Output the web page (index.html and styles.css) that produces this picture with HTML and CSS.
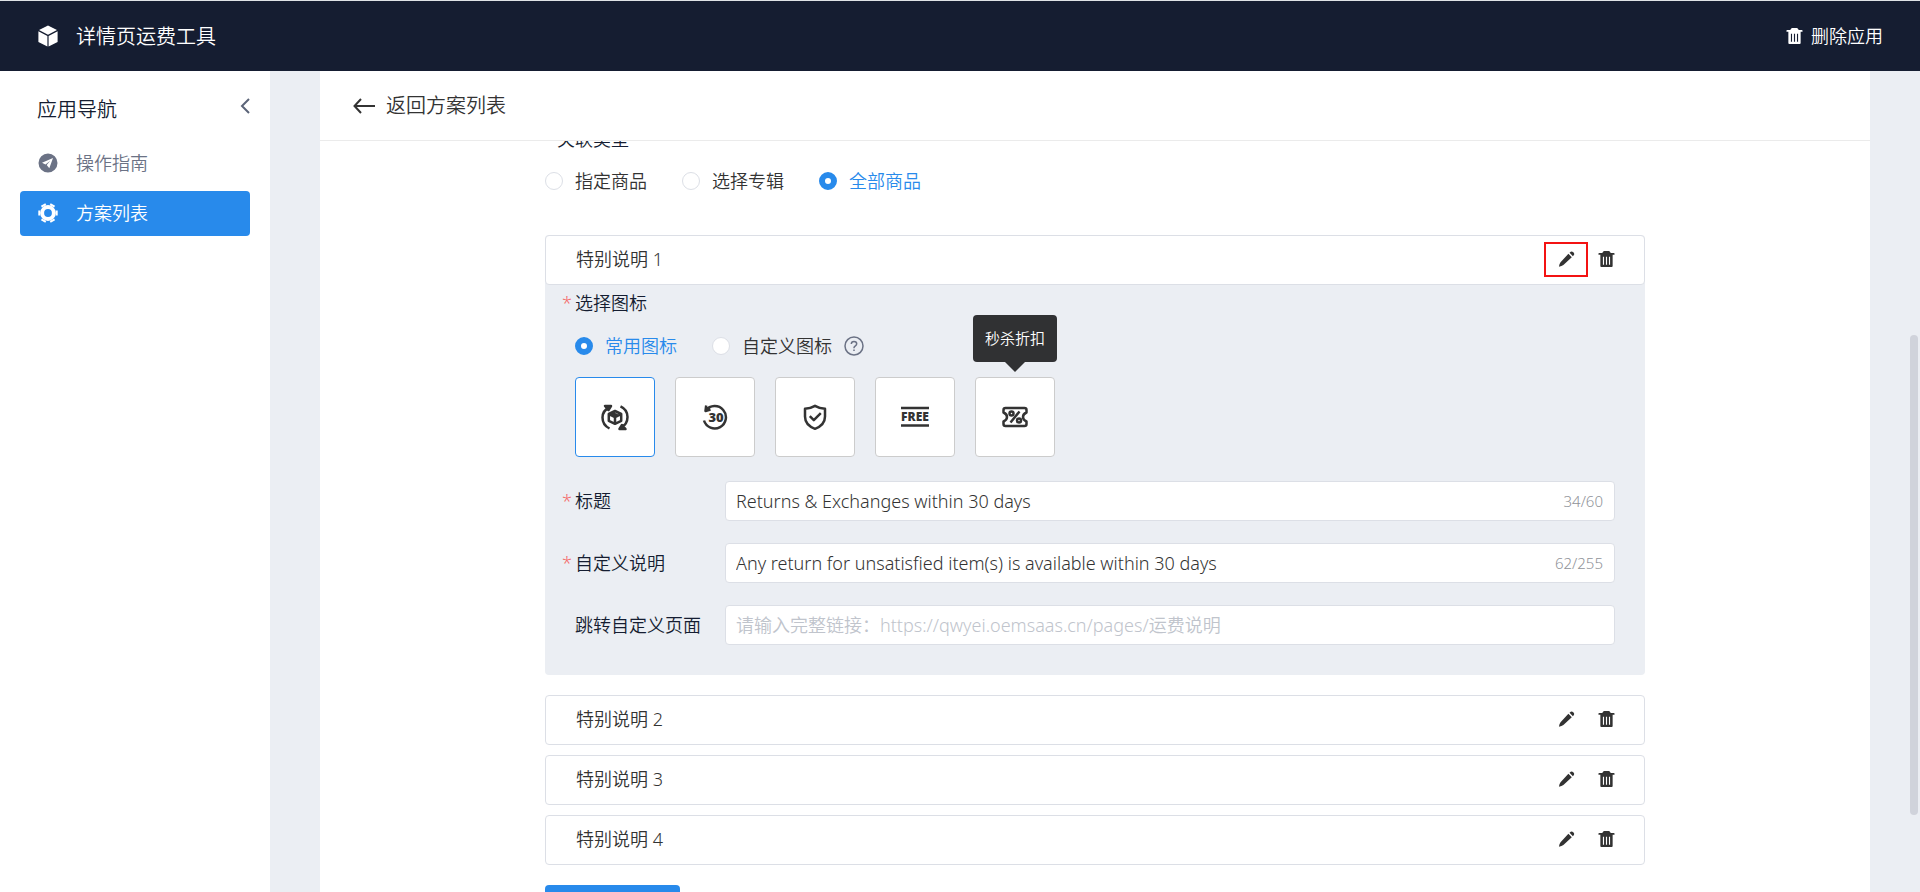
FILE: index.html
```html
<!DOCTYPE html>
<html lang="zh-CN">
<head>
<meta charset="utf-8">
<title>详情页运费工具</title>
<link rel="stylesheet" href="styles.css">
</head>
<body>
<svg class="sprite" aria-hidden="true">
  <symbol id="i-trash" viewBox="0 0 18 18"><path d="M5.400 1.200Q5.700.6 6.600.6h4.800q.9 0 1.200.6l.9 1.400h3.300q.7 0 .7.7v1.200H.5V3.300q0-.7.7-.7h3.300z"/><path fill-rule="evenodd" d="M2.500 3.500h13v13q0 1-1 1h-11q-1 0-1-1zM5.200 6.500v8.500h1.200V6.500zM8.400 6.500v8.500h1.200V6.500zM11.600 6.500v8.500h1.200V6.500z"/></symbol>
  <symbol id="i-pencil" viewBox="0 0 18 18"><path d="M11 3.500l3.600 3.600L5.700 15.400Q4 16.800 1 17.200q.3-3 1.700-4.800zM12.200 2.500l1.300-1.200q1.300-.7 2.700.6t.8 2.700l-1.200 1.400z"/></symbol>
</svg>
<div class="app">
  <header class="topbar">
    <div class="brand">
      <svg class="brand-icon" viewBox="0 0 20 22"><path d="M10 .5l9 4.500-9 4.700-9-4.700zM.4 6.300l9 4.700v10.500l-9-4.600zM19.600 6.300l-9 4.700v10.500l9-4.600z"/></svg>
      <span>详情页运费工具</span>
    </div>
    <button class="remove-app" type="button"><svg class="icon-md"><use href="#i-trash"/></svg>删除应用</button>
  </header>
  <div class="body">
    <aside class="sidebar">
      <div class="side-head">
        <span>应用导航</span>
        <button class="collapse" type="button" aria-label="收起"><svg viewBox="0 0 10 16"><path d="M9 1L2 8l7 7"/></svg></button>
      </div>
      <nav class="nav">
        <a class="nav-item" href="#"><svg class="nav-icon" viewBox="0 0 20 20"><path fill-rule="evenodd" d="M10 .5a9.500 9.500 0 1 0 0 19 9.500 9.500 0 0 0 0-19zM15 5l-3.700 10.300-2.600-3.200 3.500-4.300-4.700 3.600-3.500-1.700z"/></svg>操作指南</a>
        <a class="nav-item active" href="#"><svg class="nav-icon" viewBox="0 0 20 20"><circle class="gear-ring" cx="10" cy="10" r="5.900"/><path class="gear-teeth" d="M2.200 10H.3M17.800 10h1.900M6.100 3.300l-1-1.800M13.900 3.300l1-1.800M6.100 16.700l-1 1.800M13.900 16.700l1 1.800"/></svg>方案列表</a>
      </nav>
    </aside>
    <main class="main">
      <div class="page-head">
        <a class="back" href="#"><svg viewBox="0 0 22 16"><path d="M8 1L1.500 8 8 15M1.500 8H22"/></svg>返回方案列表</a>
      </div>
      <div class="scroller">
        <form class="content">
          <fieldset class="group">
            <legend class="group-title">关联类型</legend>
            <div class="radios">
              <label class="radio"><input type="radio" name="scope">指定商品</label>
              <label class="radio"><input type="radio" name="scope">选择专辑</label>
              <label class="radio"><input type="radio" name="scope" checked><span>全部商品</span></label>
            </div>
          </fieldset>

          <section class="note open">
            <div class="note-bar">
              <span>特别说明 1</span>
              <div class="actions">
                <button class="act marked" type="button" aria-label="编辑"><svg class="icon-md"><use href="#i-pencil"/></svg></button>
                <button class="act" type="button" aria-label="删除"><svg class="icon-md"><use href="#i-trash"/></svg></button>
              </div>
            </div>
            <div class="panel">
              <div class="label required">选择图标</div>
              <div class="radios">
                <label class="radio"><input type="radio" name="icon" checked><span>常用图标</span></label>
                <label class="radio"><input type="radio" name="icon">自定义图标</label>
                <svg class="help" viewBox="0 0 20 20"><circle cx="10" cy="10" r="9"/><path d="M7.300 8q0-2.600 2.700-2.600T12.700 7.800q0 1.200-1.300 2T10 11.700v.6M10 13.500v1.500"/></svg>
              </div>
              <div class="tiles">
                <button class="tile selected" type="button" aria-label="退换货"><svg viewBox="0 0 28 28"><path d="M14 8l6.200 3v6.800l-6.200 3-6.200-3v-6.800zM8 11.200l6 2.800 6-2.800M14 14v6.500M11 9.800l6 2.800"/><path d="M9 4Q1.500 7.500 1.500 14.500 1.500 22 8.500 25.500M4 3h6l-2.500 4zM19.500 3.300Q26.500 6.500 26.500 14q0 7-6.500 11M24.500 26h-6l2.500-4z"/></svg></button>
                <button class="tile" type="button" aria-label="30天"><svg viewBox="0 0 28 28"><path d="M4.800 7.500A11.200 11.200 0 1 1 3 17.500M5.200 2.500L4.500 8l5-1.500"/><text class="t30" x="15" y="19">30</text></svg></button>
                <button class="tile" type="button" aria-label="安全保障"><svg viewBox="0 0 28 28"><path d="M14 2.800q4.500 2.600 10 3v7.700q0 8.500-10 12.300Q4 22 4 13.500V5.800q5.500-.4 10-3z"/><path d="M8.800 13.200l4 4 7-7"/></svg></button>
                <button class="tile" type="button" aria-label="免费"><svg class="wide" viewBox="0 0 30 28"><path d="M1 5h28M1 22.500h28"/><text class="tfree" x="15" y="18">FREE</text></svg></button>
                <div class="tile-wrap">
                  <button class="tile" type="button" aria-label="秒杀折扣"><svg viewBox="0 0 28 28"><path d="M4.500 5h19q2 0 2 2v2.500q-3.500 1.500-3.500 4.500t3.500 4.500v2.500q0 2-2 2h-19q-2 0-2-2v-2.500Q6 17 6 14T2.500 9.500V7q0-2 2-2z"/><path d="M18.500 8.500l-9 11"/><circle cx="10.500" cy="10.500" r="2"/><circle cx="18" cy="17.500" r="2"/></svg></button>
                  <div class="tooltip" role="tooltip">秒杀折扣</div>
                </div>
              </div>
              <div class="fields">
                <div class="field">
                  <label class="label required" for="f-title">标题</label>
                  <div class="box"><input id="f-title" type="text" value="Returns &amp; Exchanges within 30 days"><span class="count">34/60</span></div>
                </div>
                <div class="field">
                  <label class="label required" for="f-desc">自定义说明</label>
                  <div class="box"><input id="f-desc" type="text" value="Any return for unsatisfied item(s) is available within 30 days"><span class="count">62/255</span></div>
                </div>
                <div class="field">
                  <label class="label" for="f-link">跳转自定义页面</label>
                  <div class="box"><input id="f-link" type="text" placeholder="请输入完整链接：https://qwyei.oemsaas.cn/pages/运费说明"></div>
                </div>
              </div>
            </div>
          </section>

          <section class="note"><div class="note-bar"><span>特别说明 2</span><div class="actions"><button class="act" type="button" aria-label="编辑"><svg class="icon-md"><use href="#i-pencil"/></svg></button><button class="act" type="button" aria-label="删除"><svg class="icon-md"><use href="#i-trash"/></svg></button></div></div></section>
          <section class="note"><div class="note-bar"><span>特别说明 3</span><div class="actions"><button class="act" type="button" aria-label="编辑"><svg class="icon-md"><use href="#i-pencil"/></svg></button><button class="act" type="button" aria-label="删除"><svg class="icon-md"><use href="#i-trash"/></svg></button></div></div></section>
          <section class="note"><div class="note-bar"><span>特别说明 4</span><div class="actions"><button class="act" type="button" aria-label="编辑"><svg class="icon-md"><use href="#i-pencil"/></svg></button><button class="act" type="button" aria-label="删除"><svg class="icon-md"><use href="#i-trash"/></svg></button></div></div></section>
          <button class="primary" type="button" aria-label="添加"></button>
        </form>
      </div>
    </main>
    <div class="scrollbar"></div>
  </div>
</div>
</body>
</html>
```
FILE: styles.css
```css
* { box-sizing: border-box; }
body {
  margin: 0;
  font: 350 18px/24px "Noto Sans", "Noto Sans CJK SC", sans-serif;
  color: #333;
}
button, input { font: inherit; color: inherit; }
button { padding: 0; border: 0; background: none; cursor: pointer; }
a { color: inherit; text-decoration: none; }
svg { display: block; fill: none; }
.sprite { position: absolute; width: 0; height: 0; }

.app { display: flex; flex-direction: column; height: 100vh; overflow: hidden; }
.topbar {
  display: flex; align-items: center; justify-content: space-between;
  flex: none; height: 71px; padding: 0 37px 0 38px;
  border-top: 1px solid #dfe3e6;
  background: #151d31; color: #fff;
}
.brand { display: flex; align-items: center; gap: 18px; font-size: 20px; line-height: 28px; }
.brand span { padding-top: 2px; }
.brand-icon { width: 20px; height: 22px; fill: #fff; }
.remove-app { display: flex; align-items: center; gap: 8px; }
.icon-md { width: 17px; height: 18px; fill: currentColor; }

.body { position: relative; display: flex; flex: 1; min-height: 0; background: #ebeef3; }
.sidebar { flex: none; width: 270px; padding: 20px 20px 0; background: #fff; }
.side-head {
  display: flex; justify-content: space-between; align-items: flex-start;
  height: 36px; padding: 7px 0 0 17px; font-size: 20px; color: #151d31;
}
.collapse svg { width: 10px; height: 16px; stroke: #5b6478; stroke-width: 2; }
.nav { display: flex; flex-direction: column; gap: 5px; margin-top: 14px; }
.nav-item {
  display: flex; align-items: center; gap: 18px;
  height: 45px; padding: 0 18px 1px; border-radius: 4px; color: #6b7285;
}
.nav-item.active { background: #288aeb; color: #fff; }
.nav-icon { width: 20px; height: 20px; fill: currentColor; }
.gear-ring { fill: none; stroke: #fff; stroke-width: 4; }
.gear-teeth { stroke: #fff; stroke-width: 5; }

.main { display: flex; flex-direction: column; flex: 1; min-width: 0; margin: 0 50px; background: #fff; }
.page-head {
  display: flex; align-items: center; flex: none; height: 70px; padding: 0 33px;
  border-bottom: 1px solid #ebebeb;
}
.back { display: flex; align-items: center; gap: 11px; font-size: 20px; }
.back svg { width: 22px; height: 16px; stroke: #333; stroke-width: 2; }
.scroller { flex: 1; min-height: 0; overflow: hidden; }
.content { width: 71%; max-width: 1100px; margin: -14px auto 0; }
.group { margin: 0 0 42px; padding: 0; border: 0; }
.group-title { margin-bottom: 18px; padding: 0 12px; color: #151d31; }
.radios { display: flex; align-items: center; gap: 35px; height: 24px; }
.radio { display: flex; align-items: center; gap: 12px; }
.radio input {
  appearance: none; width: 18px; height: 18px; margin: 0;
  border: 1px solid #dcdfe6; border-radius: 50%; background: #fff;
}
.radio input:checked { border: 6px solid #288aeb; }
.radio input:checked + span { color: #288aeb; }

.note { margin-bottom: 10px; }
.note.open { margin-bottom: 20px; border-radius: 4px; background: #ebeef3; }
.note-bar {
  display: flex; justify-content: space-between; align-items: center;
  height: 50px; padding: 0 29px 2px 30px;
  border: 1px solid #dcdfe6; border-radius: 4px; background: #fff;
}
.actions { display: flex; align-items: center; }
.act { display: grid; place-items: center; width: 17px; height: 35px; }
.act:first-child { width: 44px; margin-right: 10px; }
.act.marked { border: 2px solid #f31313; }

.panel { padding: 6px 30px 30px; }
.label { position: relative; color: #151d31; }
.required::before { content: "*"; position: absolute; left: -13px; color: #f56c6c; }
.panel .radios { margin: 19px 0; }
.help { width: 20px; height: 20px; margin-left: -23px; stroke: #6b7285; stroke-width: 1.5; }
.tiles { display: flex; gap: 20px; }
.tile {
  display: grid; place-items: center; width: 80px; height: 80px;
  border: 1px solid #ccc; border-radius: 4px; background: #fff;
}
.tile.selected { border-color: #288aeb; }
.tile svg { width: 28px; height: 28px; stroke: #333; stroke-width: 2.5; stroke-linejoin: round; }
.tile .wide { width: 30px; }
.tile text { fill: #333; stroke: none; text-anchor: middle; font-family: "Noto Sans", sans-serif; font-weight: 900; }
.t30 { font-size: 13px; }
.tfree { font-size: 12px; }
.tile-wrap { position: relative; }
.tooltip {
  position: absolute; bottom: 95px; left: 50%; transform: translateX(-50%);
  padding: 12px; border-radius: 4px; background: #303133; color: #fff;
  font-size: 15px; line-height: 23px; white-space: nowrap;
}
.tooltip::after {
  content: ""; position: absolute; top: 100%; left: 50%; margin-left: -10px;
  border: 10px solid transparent; border-bottom: 0; border-top-color: #303133;
}
.fields { display: flex; flex-direction: column; gap: 22px; margin-top: 24px; }
.field { display: grid; grid-template-columns: 150px 1fr; align-items: center; }
.box {
  display: flex; align-items: center; height: 40px; padding: 0 11px 0 10px;
  border: 1px solid #dcdfe6; border-radius: 4px; background: #fff;
}
.box input { flex: 1; min-width: 0; height: 38px; padding: 0; border: 0; outline: 0; background: none; }
.box input::placeholder { color: #c0c4cc; }
.count { font-size: 15px; color: #909399; }
.primary { width: 135px; height: 40px; margin-top: 10px; border-radius: 4px; background: #288aeb; }
.scrollbar { position: absolute; right: 2px; top: 264px; width: 8px; height: 480px; border-radius: 4px; background: #d0d3db; }
```
